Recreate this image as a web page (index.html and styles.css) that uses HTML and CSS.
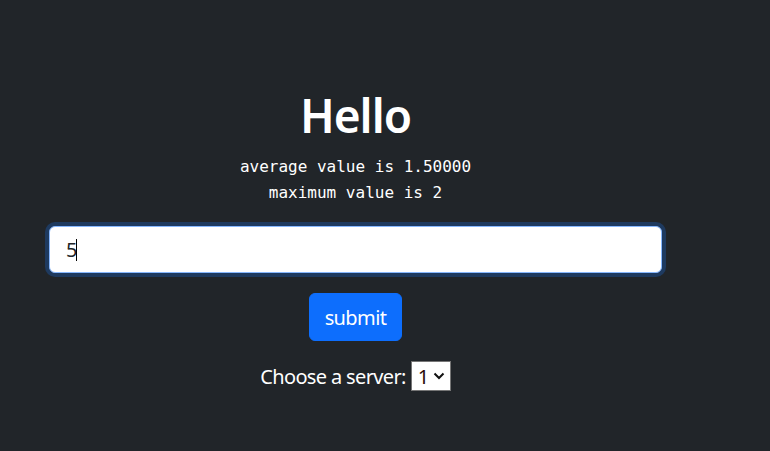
FILE: index.html
```html
<!DOCTYPE html>
<html lang="en">
<head>
<meta charset="utf-8">
<title>Hello</title>
<link rel="stylesheet" href="styles.css">
</head>
<body>
<main class="container">
  <h1 class="title">Hello</h1>
  <div class="stats">
    <div>average value is 1.50000</div>
    <div>maximum value is 2</div>
  </div>
  <form class="form" onsubmit="return false">
    <div class="field-wrap">
      <input class="field" type="text" value="5">
      <span class="caret"></span>
    </div>
    <button class="btn" type="submit">submit</button>
    <label class="server">Choose a server:
      <span class="select-wrap">
        <select class="select">
          <option>1</option>
          <option>2</option>
        </select>
        <svg class="chevron" width="12" height="8" viewBox="0 0 12 8"><path d="M1.5 1.5 L6 6 L10.5 1.5" fill="none" stroke="#111" stroke-width="2"/></svg>
      </span>
    </label>
  </form>
</main>
</body>
</html>
```

FILE: styles.css
```css
html, body {
  margin: 0;
  padding: 0;
  background: #212529;
  color: #fff;
  font-family: "Noto Sans", "Open Sans", sans-serif;
}
.container {
  width: 613px;
  margin-left: 49px;
  padding-top: 87px;
  text-align: center;
}
.title {
  margin: 0;
  font-size: 46px;
  font-weight: 600;
  letter-spacing: -1px;
  line-height: 56px;
}
.stats {
  margin-top: 11px;
  font-family: "DejaVu Sans Mono", monospace;
  font-size: 16px;
  line-height: 26px;
}
.form {
  margin-top: 20px;
  display: flex;
  flex-direction: column;
  align-items: center;
}
.field-wrap {
  position: relative;
  width: 613px;
}
.field {
  display: block;
  box-sizing: border-box;
  width: 613px;
  height: 47px;
  padding: 0 16px;
  font-family: inherit;
  font-size: 20px;
  color: #212529;
  background: #fff;
  border: 1px solid #86b7fe;
  border-radius: 6px;
  box-shadow: 0 0 0 4px #1e3a5f;
  outline: none;
}
.caret {
  position: absolute;
  left: 27px;
  top: 13px;
  width: 1px;
  height: 22px;
  background: #000;
}
.btn {
  margin-top: 20px;
  width: 93px;
  height: 48px;
  background: #0d6efd;
  color: #fff;
  border: 1px solid #0d6efd;
  border-radius: 6px;
  font-family: inherit;
  font-size: 20px;
  letter-spacing: -0.6px;
  padding: 0;
}
.server {
  margin-top: 20px;
  font-size: 20px;
  letter-spacing: -0.65px;
  display: flex;
  align-items: center;
  gap: 5px;
}
.select-wrap {
  position: relative;
  display: inline-block;
}
.select {
  display: block;
  appearance: none;
  -webkit-appearance: none;
  box-sizing: border-box;
  width: 40px;
  height: 30px;
  padding: 0 0 0 6px;
  border: 1px solid #767676;
  border-radius: 0;
  background: #fff;
  color: #2a0a0a;
  font-family: inherit;
  font-size: 20px;
  letter-spacing: 0;
  text-align: left;
}
.chevron {
  position: absolute;
  right: 6px;
  top: 11px;
  pointer-events: none;
}
```
